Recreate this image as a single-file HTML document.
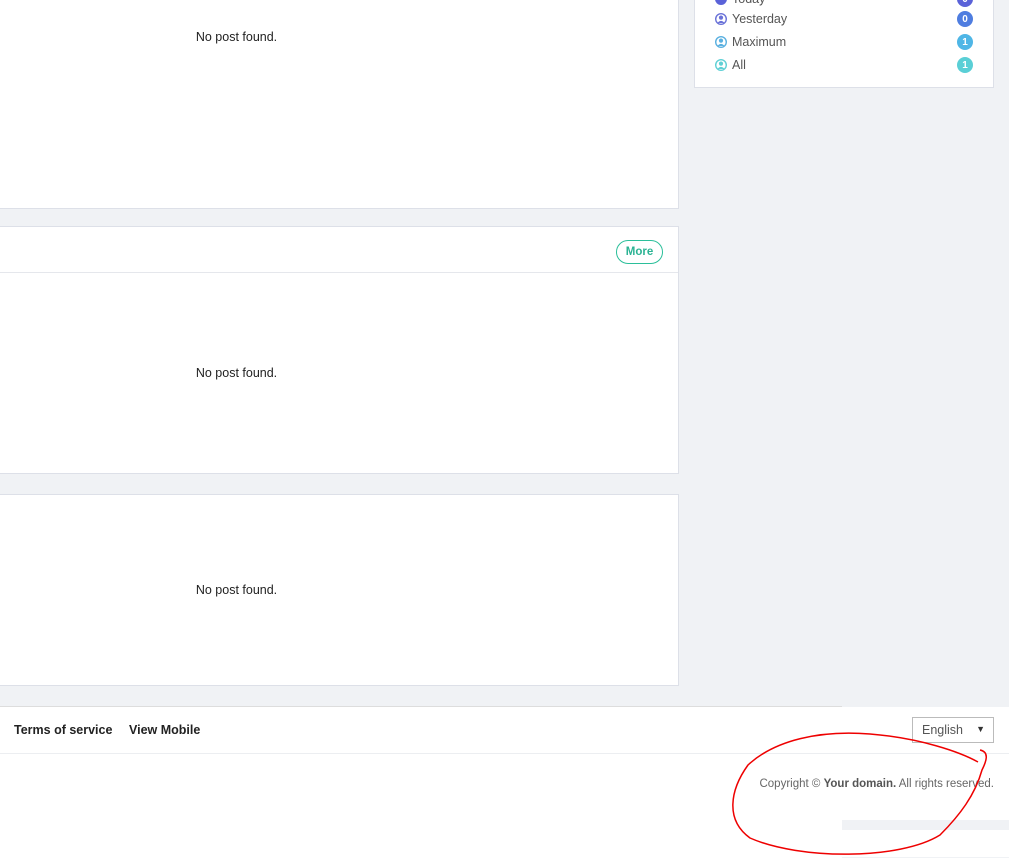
<!DOCTYPE html>
<html><head><meta charset="utf-8"><style>
body{margin:0;width:1009px;height:857px;background:#f0f2f5;font-family:"Liberation Sans","Noto Sans CJK KR",sans-serif;position:relative;overflow:hidden;color:#333}
.box{position:absolute;background:#fff;border:1px solid #dde0e8;box-sizing:border-box}
.np{position:absolute;left:0;width:473px;text-align:center;font-size:12.5px;color:#222}
.row{position:absolute;left:715px;font-size:12.5px;color:#555;display:flex;align-items:center}
.row svg{margin-right:5px}
.bd{position:absolute;left:957px;width:16px;height:16px;border-radius:8px;color:#fff;font-size:10px;font-weight:bold;display:flex;align-items:center;justify-content:center}
</style></head><body>
<div class="box" style="left:-2px;top:-2px;width:681px;height:211px"></div>
<div class="np" style="top:30px">No post found.</div>
<div class="box" style="left:-2px;top:226px;width:681px;height:248px"></div>
<div style="position:absolute;left:0;top:272px;width:678px;height:1px;background:#e5e7ec"></div>
<div style="position:absolute;left:616px;top:240px;width:47px;height:24px;box-sizing:border-box;border:1.5px solid #2bbf9a;border-radius:12px;color:#2bb393;font-size:11.5px;font-weight:bold;display:flex;align-items:center;justify-content:center">More</div>
<div class="np" style="top:366px">No post found.</div>
<div class="box" style="left:-2px;top:494px;width:681px;height:192px"></div>
<div class="np" style="top:583px">No post found.</div>
<div class="box" style="left:694px;top:-2px;width:300px;height:90px"></div>
<div class="row" style="top:-8px"><svg width="12" height="12" viewBox="0 0 12 12"><circle cx="6" cy="6" r="6" fill="#5a62d8"/></svg>Today</div>
<div class="bd" style="top:-9px;background:#5a62d8">0</div>
<div class="row" style="top:12px"><svg width="12" height="12" viewBox="0 0 12 12"><circle cx="6" cy="6" r="5.3" fill="#fff" stroke="#6a72d8" stroke-width="1.4"/><circle cx="6" cy="4.6" r="2.1" fill="#6a72d8"/><path d="M2.5,10 Q6,5.8 9.5,10Z" fill="#6a72d8"/></svg>Yesterday</div>
<div class="bd" style="top:11px;background:#4f7de0">0</div>
<div class="row" style="top:35px"><svg width="12" height="12" viewBox="0 0 12 12"><circle cx="6" cy="6" r="5.3" fill="#fff" stroke="#5ab0e0" stroke-width="1.4"/><circle cx="6" cy="4.6" r="2.1" fill="#5ab0e0"/><path d="M2.5,10 Q6,5.8 9.5,10Z" fill="#5ab0e0"/></svg>Maximum</div>
<div class="bd" style="top:34px;background:#4fb6e6">1</div>
<div class="row" style="top:58px"><svg width="12" height="12" viewBox="0 0 12 12"><circle cx="6" cy="6" r="5.3" fill="#fff" stroke="#5fd0d5" stroke-width="1.4"/><circle cx="6" cy="4.6" r="2.1" fill="#5fd0d5"/><path d="M2.5,10 Q6,5.8 9.5,10Z" fill="#5fd0d5"/></svg>All</div>
<div class="bd" style="top:57px;background:#5acfd6">1</div>
<div style="position:absolute;left:0;top:706px;width:842px;height:151px;background:#fff;border-top:1px solid #ddd"></div>
<div style="position:absolute;left:842px;top:707px;width:167px;height:113px;background:#fff"></div>
<div style="position:absolute;left:842px;top:830px;width:167px;height:27px;background:#fff"></div>
<div style="position:absolute;left:0;top:753px;width:1009px;height:1px;background:#eceef1"></div>
<div style="position:absolute;left:14px;top:723px;font-size:12.5px;font-weight:bold;color:#222">Terms of service</div>
<div style="position:absolute;left:129px;top:723px;font-size:12.5px;font-weight:bold;color:#222">View Mobile</div>
<div style="position:absolute;left:912px;top:717px;width:82px;height:26px;border:1px solid #bbb;box-sizing:border-box;font-size:12.5px;color:#555;padding:5px 0 0 9px">English<span style="position:absolute;right:8px;top:6px;font-size:9px;color:#333">▼</span></div>
<div style="position:absolute;right:15px;top:778px;font-size:11.5px;color:#666">Copyright © <b style="color:#555">Your domain.</b> All rights reserved.</div>
<svg style="position:absolute;left:0;top:0" width="1009" height="857"><path d="M980,750 C990,752 986,762 982,770 C975,795 960,815 940,835 C900,860 800,860 750,838 C725,820 730,790 748,765 C775,740 820,730 870,734 C920,738 960,752 978,762" fill="none" stroke="#e00" stroke-width="1.5"/></svg>
</body></html>
